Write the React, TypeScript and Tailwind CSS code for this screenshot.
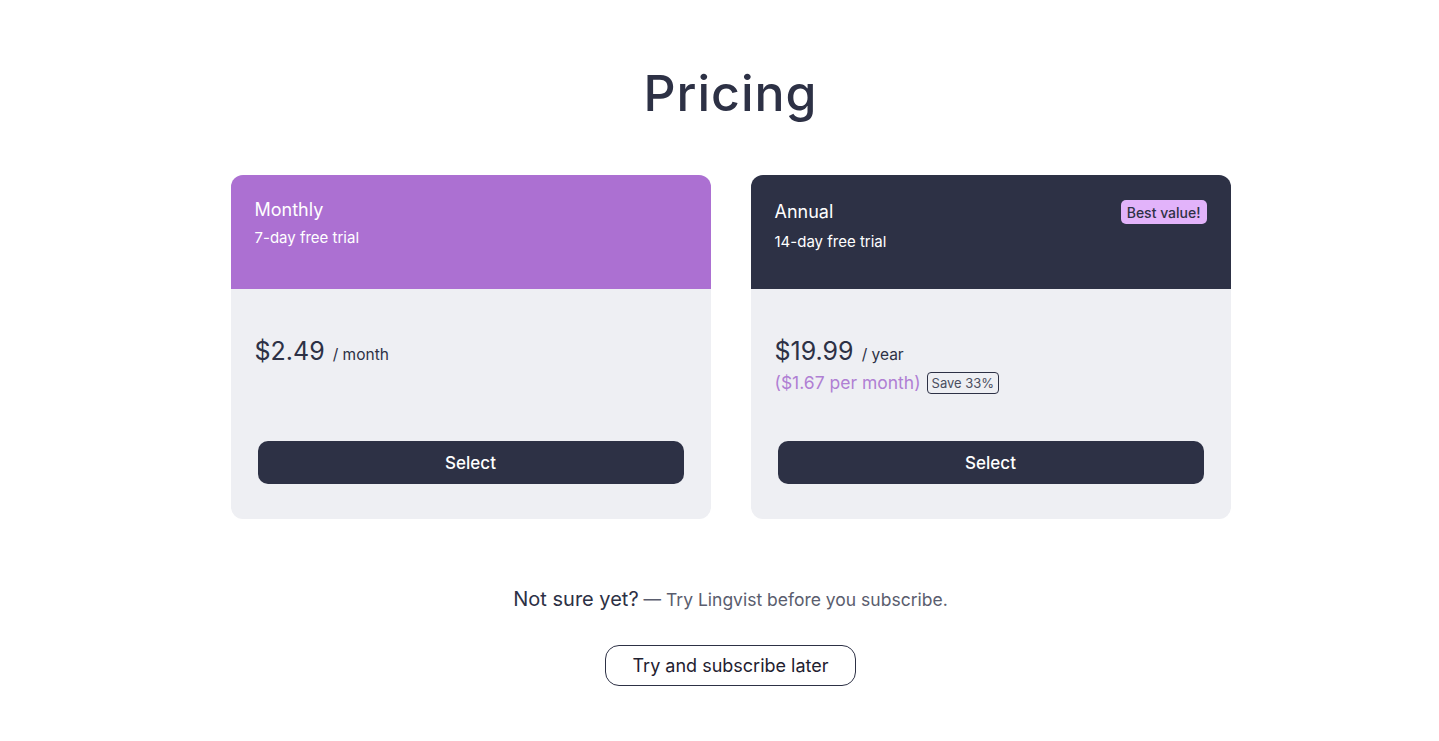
export default function App() {
  return (
    <div className="min-h-screen bg-white flex flex-col items-center pl-[22px] text-[#2d3145]" style={{ fontFamily: 'Inter, "Noto Sans", sans-serif' }}>
      <h1 className="mt-[66px] text-[50px] leading-[54px] font-medium tracking-[0.02em]">Pricing</h1>

      <div className="mt-[55px] flex gap-10">
        {/* Monthly */}
        <div className="w-[480px] h-[344px] rounded-xl overflow-hidden bg-[#eeeff3] flex flex-col">
          <div className="h-[114px] bg-[#ac70d2] px-6 pt-[23px] text-white">
            <div className="text-[18px] leading-6">Monthly</div>
            <div className="mt-[5px] text-[15px] leading-[22px]">7-day free trial</div>
          </div>
          <div className="flex-1 flex flex-col px-6 pt-[46px] pb-[35px]">
            <div className="flex items-baseline leading-8">
              <span className="text-[25px]">$2.49</span>
              <span className="ml-2 text-[15.5px]">/ month</span>
            </div>
            <button className="mt-auto mx-[3px] h-[43px] pt-[2px] rounded-[10px] bg-[#2d3145] text-white text-[17px] font-medium">Select</button>
          </div>
        </div>

        {/* Annual */}
        <div className="w-[480px] h-[344px] rounded-xl overflow-hidden bg-[#eeeff3] flex flex-col">
          <div className="h-[114px] bg-[#2d3145] px-6 pt-[23px] text-white">
            <div className="h-7 flex items-center justify-between">
              <span className="text-[18px] leading-6">Annual</span>
              <span className="rounded-[5px] bg-[#e2b3fa] px-[6px] h-6 flex items-center text-[14px] font-medium text-[#2d3145]">Best value!</span>
            </div>
            <div className="mt-[5px] text-[15px] leading-[22px]">14-day free trial</div>
          </div>
          <div className="flex-1 flex flex-col px-6 pt-[46px] pb-[35px]">
            <div className="flex items-baseline leading-8">
              <span className="text-[25px]">$19.99</span>
              <span className="ml-2 text-[15.5px]">/ year</span>
            </div>
            <div className="flex items-center leading-6">
              <span className="text-[17.5px] text-[#b07fd3]">($1.67 per month)</span>
              <span className="ml-[6px] rounded-[4px] border border-[#2d3145] px-1 text-[13px] leading-[20px] text-[#4a4e60]">Save 33%</span>
            </div>
            <button className="mt-auto mx-[3px] h-[43px] pt-[2px] rounded-[10px] bg-[#2d3145] text-white text-[17px] font-medium">Select</button>
          </div>
        </div>
      </div>

      <p className="mt-[66px] leading-7">
        <span className="text-[20px] text-[#2d3145]">Not sure yet?</span>
        <span className="text-[17.5px] text-[#5a5d6e]"> — Try Lingvist before you subscribe.</span>
      </p>

      <button className="mt-[31px] h-[41px] w-[251px] rounded-[14px] border border-[#2d3145] bg-white text-[18px] text-[#1f2130]">
        Try and subscribe later
      </button>
    </div>
  )
}
